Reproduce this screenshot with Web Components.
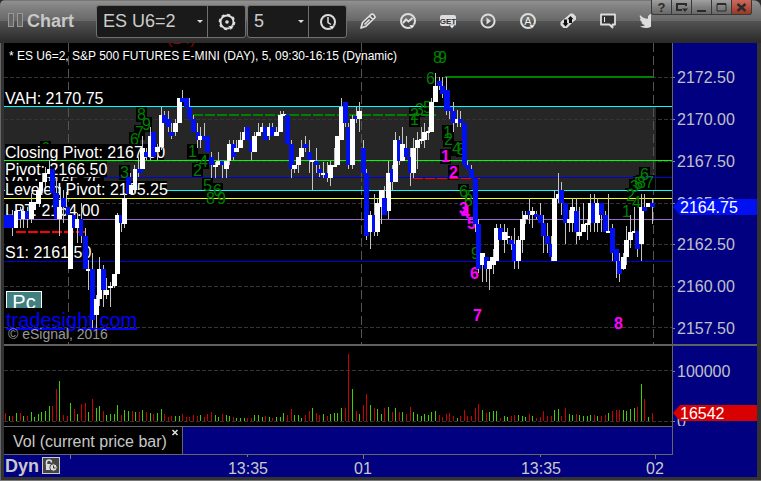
<!DOCTYPE html>
<html lang="en">
<head>
<meta charset="utf-8">
<title>Chart</title>
<style>
html,body{margin:0;height:100%;background:#2b2b2b}
body{font-family:"Liberation Sans",Arial,sans-serif;font-size:16px;color:#c8c8c8}
</style>
</head>
<body>
<chart-window>
  <title-bar slot="title" name="Chart"></title-bar>
  <price-plot slot="price"></price-plot>
  <value-axis slot="price-axis" kind="price"></value-axis>
  <volume-plot slot="volume"></volume-plot>
  <value-axis slot="volume-axis" kind="volume"></value-axis>
  <study-tabs slot="tabs">Vol (current price bar)</study-tabs>
  <time-axis slot="time"></time-axis>
</chart-window>
<script>
const define = (name, html, setup) => customElements.define(name, class extends HTMLElement {
  connectedCallback() {
    if (this.shadowRoot) return;
    this.attachShadow({mode: 'open'}).innerHTML = typeof html === 'function' ? html(this) : html;
    if (setup) setup(this, this.shadowRoot);
  }
});

/* Colour names used by the plots */
const UP = '#fff', DOWN = '#0010f0';
const rect = (x, y, w, h, fill) => `<rect x="${x}" y="${y}" width="${w}" height="${h}" fill="${fill}"/>`;
const dash = (x1, y, x2, c, d, w = 1, o = 0) => `<path d="M${x1} ${y}H${x2}" stroke="${c}" stroke-width="${w}" stroke-dasharray="${d}" stroke-dashoffset="${o}"/>`;
const px = v => Math.round(v / 3);

/* Candle sets: origin, then bodies (colour, left, right, top, bottom) and wicks (x, top, bottom), three units to a pixel */
const SETS = [
{o:[0,200], c:`b 12 22 45 84;b 22 42 45 84;w 42 54 33 84;b 54 64 33 57;w 63 75 33 57;b 75 87 33 57;w 87 102 5 57;b 162 172 -20 57;w 172 185 0 57;b 183 198 -6 20;b 198 210 20 45;w 204 219 45 207;b 216 228 45 84;w 225 240 57 84;b 237 250 57 107;b 249 264 107 207;w 258 270 207 213;b 270 285 207 360;w 282 298 297 345;w 291 305 207 297;b 303 318 207 270;w 312 327 270 285;w 324 339 258 263;w 336 351 222 258;w 345 360 45 222;b 357 369 45 70;w 366 381 -6 72`,
 w:`37 30 107;61 20 84;70 20 84;82 20 84;94 -20 70;178 0 107;190 -30 70;199 -25 20;232 40 130;244 8 130;256 84 207;265 180 270;277 160 384;289 285 384;298 170 318;310 195 320;319 235 297;331 247 321;343 222 265;352 40 222;364 45 95;373 -20 84`},
{o:[0,70], c:`w 95 108 395 420;w 108 122 360 402;w 117 130 335 362;w 130 142 308 335;w 142 152 297 312;b 150 165 297 370;b 160 176 370 410;b 378 393 322 372;w 387 400 345 372;w 399 411 297 360;b 411 429 297 308;w 420 435 235 297;b 432 444 247 260;w 444 456 198 260;b 453 468 185 260;w 465 480 232 247;w 477 492 135 232;b 486 501 135 158;b 498 513 147 170;b 507 522 185 198;w 519 534 158 185;w 531 546 85 158`,
 w:`118 345 410;127 310 370;136 290 350;148 270 310;169 320 400;181 350 400;392 310 372;403 285 372;415 260 320;427 197 310;439 235 270;451 172 270;472 222 270;484 110 240;493 122 160;504 122 185;514 158 208;526 147 198`},
{o:[170,70], c:`w 9 24 158 185;w 21 36 85 158;b 30 44 85 97;b 42 57 85 111;b 50 65 110 147;b 63 77 147 185;b 77 90 185 210;w 84 96 198 210;b 96 107 198 210;b 105 119 198 247;b 118 131 260 285;w 129 144 285 291;w 138 150 272 285;b 150 162 272 285;w 162 177 272 297;w 171 183 222 272;b 183 198 222 260;w 192 206 235 247;w 204 218 210 235;w 216 228 185 210;b 225 240 172 210;b 237 247 210 245;w 246 261 198 245;w 258 273 185 198;w 270 280 172 185;b 279 294 172 210;w 291 303 172 198;b 300 315 172 198;w 312 327 185 198;w 324 339 135 185;w 333 348 132 138;b 345 360 135 222;b 357 372 222 297;w 366 381 285 297;w 378 393 260 285;w 387 402 235 260;b 399 413 222 235;b 411 425 247 270;w 420 435 270 276;b 432 447 273 285;b 441 455 297 308;w 453 465 309 315;b 465 475 309 323;w 474 489 285 323;w 486 501 285 291;w 495 509 198 285;w 507 521 111 210;b 519 533 97 158;b 528 541 172 285;w 540 555 147 285;b 552 562 138 147;w 561 576 122 147;b 573 588 235 309;b 582 597 309 497`,
 w:`16 147 197;37 60 97;58 85 140;70 135 185;82 160 235;91 172 235;103 158 198;124 247 323;136 275 323;145 247 285;157 285 323;169 285 323;178 210 285;190 210 270;199 210 247;211 185 235;223 172 210;244 245 270;253 185 245;265 160 198;277 158 185;298 160 210;307 160 198;319 172 198;331 122 185;340 122 137;364 210 323;373 285 310;385 260 309;394 210 260;406 198 247;418 210 309;427 270 360;439 235 309;448 285 320;460 275 323;472 275 335;481 272 347;493 235 291;514 85 210;526 97 170;535 160 297;547 135 297;559 110 160;568 97 185;580 210 300;589 297 330`},
{o:[350,60], c:`w 108 123 338 453;b 120 135 328 365;w 129 144 240 365;b 141 152 240 302;w 150 165 252 302;b 162 177 264 290;b 174 189 290 338;w 183 198 264 338;w 195 210 240 264;w 207 222 237 242;w 216 231 216 240;w 228 240 213 218;w 237 252 126 216;w 249 264 78 126;b 261 276 63 78;b 270 285 78 102;b 282 299 90 153;b 297 308 142 153;b 303 318 153 188;w 315 325 177 188;b 325 340 177 190;b 336 351 190 315;b 345 360 315 327;b 357 371 327 353;b 369 384 353 492`,
 w:`115 302 340;127 315 390;136 216 240;148 228 315;157 202 302;169 228 290;181 264 378;190 235 353;202 216 327;214 202 252;223 190 264;235 202 240;244 115 216;256 40 126;268 52 90;277 52 115;289 52 165;298 90 177;310 127 215;322 150 202;331 153 200;352 302 327;364 315 353`},
{o:[350,180], c:`w 54 67 105 155;b 66 76 105 155;w 75 90 69 155;w 87 102 30 80;b 96 110 54 105;b 378 393 132 267;w 390 405 219 255;b 402 417 231 267;w 411 426 243 267;w 420 438 231 255;w 432 447 144 243;b 444 459 144 180;w 456 471 156 180;w 471 480 168 174;b 477 492 180 192;b 486 498 192 243;w 498 513 180 243;w 510 525 117 180;w 519 534 105 117;b 531 544 93 105`,
 w:`49 167 180;61 93 207;73 42 167;82 57 167;94 30 132;103 18 105;115 93 117;376 132 155;385 117 280;397 219 306;409 231 306;418 243 330;430 207 282;439 132 243;451 132 180;463 132 218;472 144 192;484 168 210;493 144 267;505 168 267;517 93 218;526 93 132;538 55 132`},
{o:[520,160], c:`w 30 45 153 165;b 42 55 163 170;b 54 69 165 190;b 63 78 190 228;b 75 90 228 252;b 87 97 252 290;w 96 111 115 302;w 108 118 102 115;b 117 131 90 128;b 129 144 128 190;w 141 153 178 190;w 150 165 140 190;b 162 177 153 216;w 171 186 216 228;w 183 198 192 216;w 195 210 190 195;w 204 216 128 190;b 214 230 128 190;w 225 240 128 190;b 237 251 128 165;b 249 264 165 216;w 258 270 213 218;b 270 285 204 278;b 282 297 267 303;b 291 306 303 342;w 303 318 290 327;w 312 327 240 290;w 324 339 216 240;w 336 348 213 218;b 345 360 213 267;w 357 372 140 252;b 366 381 140 152;w 378 390 128 140;b 390 405 128 140`,
 w:`28 115 190;37 140 203;49 153 178;61 128 190;70 165 278;82 190 278;94 228 302;103 90 115;115 40 128;124 66 165;136 128 252;148 150 216;157 115 216;169 115 252;178 140 240;190 128 216;202 178 240;211 102 216;223 102 216;232 115 216;244 128 216;256 153 216;265 102 218;277 192 303;289 267 353;298 280 365;310 280 330;319 198 315;331 165 265;343 140 216;352 213 290;364 102 303;373 102 153;397 115 192`}
];

function candles() {
  let wicks = '', bodies = '';
  for (const s of SETS) {
    for (const k of s.w.split(';')) {
      const [x, a, b] = k.split(' ').map(Number);
      wicks += rect(s.o[0] + Math.floor(x / 3), s.o[1] + px(a), 1, px(b) - px(a), '#c4c4c4');
    }
    for (const k of s.c.split(';')) {
      const p = k.split(' '), [l, r, t, b] = p.slice(1).map(Number);
      bodies += rect(s.o[0] + px(l), s.o[1] + px(t), px(r) - px(l), Math.max(2, px(b) - px(t)), p[0] === 'w' ? UP : DOWN);
    }
  }
  return wicks + bodies;
}

/* Countdown digits: text, x, baseline */
const GREEN = [['8',137,120],['9',142,130],['7',135,138],['6',130,145],['3',120,178],['2',125,160],['6',41,154],
['1',188,157],['4',199,167],['2',193,176],['5',203,191],['6',213,196],['8',206,204],['9',217,204],
['1',410,125],['2',410,120],['3',415,115],['5',423,113],['6',426,84],['8',433,63],['9',438,63],
['1',443,138],['2',444,145],['4',452,154],['5',457,155],['6',459,197],['7',462,202],['8',464,206],['9',471,259],
['1',622,217],['4',632,208],['2',626,201],['3',630,192],['5',634,189],['8',637,188],['6',640,180],['7',645,188]];
const PINK = [['1',441,162],['2',449,178],['3',459,214],['4',461,218],['5',467,229],['6',470,279],['7',473,321],['8',614,329]];
const LABELS = [['VAH: 2170.75',104,99],['VAL: 2165.75',188,99],['Closing Pivot: 2167.50',158,159],['Pivot: 2166.50',175,102],['Leveled Pivot: 2165.25',195,162],['LPT: 2164.00',216,95],['S1: 2161.50',258,86]];

define('price-plot', () => {
  let g = rect(4, 107, 652, 84, '#262626');
  for (const y of [77, 119, 161, 203, 244, 286, 327]) g += dash(4, y + .5, 672, '#343434', '4 2');
  for (const x of [68, 361, 653]) g += `<path d="M${x}.5 43V344" stroke="#555" stroke-dasharray="9 4"/>`;
  let lines = '';
  for (const [y, c] of [[106,'#00ffff'],[160,'#00ff00'],[177,'#0000e0'],[190,'#00ffff'],[198,'#ffff00'],[219,'#9966cc'],[261,'#0000e0']]) lines += rect(4, y, 668, 1, c);
  lines += dash(193, 115, 436, '#008000', '10 2', 2);
  lines += rect(445, 76, 208, 2, '#008000');
  lines += dash(16, 232, 85, '#f00', '10 2', 2) + dash(413, 178.5, 480, '#f00', '10 2');
  let boxes = '', digits = '';
  for (const [t, x, y] of GREEN) { boxes += rect(x - 1, y - 13, 11, 15, '#000'); digits += `<text x="${x}" y="${y}" fill="#008000">${t}</text>`; }
  for (const [t, x, y] of PINK) { if (y < 180) boxes += rect(x - 1, y - 13, 11, 15, '#000'); digits += `<text x="${x}" y="${y}" fill="#f0f" font-weight="bold">${t}</text>`; }
  const labels = LABELS.map(([t, y, w]) => rect(5, y - 14, w, 16, '#000') + `<text x="5" y="${y}" fill="#fff">${t}</text>`).join('');
  return `<style>
    :host{display:block;background:#000;position:relative;overflow:hidden;min-width:0}
    svg{display:block;width:100%;height:100%}
    text{font-size:16px}
    .head{font-size:12px}.copy{font-size:14px}.link{font-size:20px;text-decoration:underline}
    button{position:absolute;left:2px;bottom:36px;width:36px;height:17px;padding:0;border:1px solid #fff;border-bottom:0;background:#408080;color:#fff;font:20px/20px "Liberation Sans",sans-serif;overflow:hidden}
  </style>
  <svg viewBox="4 43 668 301" preserveAspectRatio="xMinYMin slice" role="img" aria-label="Price chart">
    <g shape-rendering="crispEdges" fill="none">${g}</g>
    ${boxes}
    <g shape-rendering="crispEdges" fill="none">${lines}</g>
    <text x="167" y="44" fill="#900000">(14)</text>
    ${digits}${labels}
    <a href="#tradesight"><text class="link" x="6" y="327" fill="#0000ff">tradesight.com</text></a>
    <text class="copy" x="8" y="339" fill="#999">© eSignal, 2016</text>
    <g shape-rendering="crispEdges">${candles()}</g>
    <text class="head" x="9" y="60" fill="#fff">* ES U6=2, S&amp;P 500 FUTURES E-MINI (DAY), 5, 09:30-16:15 (Dynamic)</text>
  </svg><button type="button">Pc</button>`;
});

/* Volume bars: origin x, then colour, x and top, three units to a pixel */
const VOLUME = [
[0,`r16 220;g28 228;r37 228;g49 219;r61 219;g70 228;r82 228;g94 216;g103 231;g115 222;g124 216;g136 213;g148 198;r157 198;r169 147;g178 123;r190 225;r202 228;g211 189;r223 207;g232 222;r244 192;r256 189;g265 216;r277 177;g289 204;g298 198;r310 213;g319 225;g331 222;g343 222;g352 195;r364 225;g373 210;g385 213;r397 213;g406 216;r418 216;g427 210;r439 216;g451 219;r460 222;g472 219;g484 207;r493 222;r505 231;r514 228;g526 228;g538 228;r547 222;r559 231;r568 231;r580 225;r592 228;g601 225;r613 231;r622 222;r634 216;g646 225;g655 231;r667 222;g679 225;g688 228;r700 231;g709 234;g721 234;g733 234;r742 234;r754 234`],
[254,`g1 225;g13 225;g25 231;r34 228;g46 231;r55 234;g67 231;g79 231;g88 219;r100 225;r112 207;g121 225;g133 225;g142 234;r154 225;r166 213;g175 204;r187 219;r196 225;g208 222;r220 228;g229 222;g241 219;g250 219;g262 204;r274 204;r283 42;g295 147;r307 213;g316 222;r328 195;r337 162;g349 195;r361 204;g370 207;g382 222;r391 204;g403 201;r415 216;g424 204;r436 216;g445 216;r457 222;r469 201;g478 216;g490 222;g502 228;g511 222;g523 225;g532 216;g544 213;r556 225;r565 231;r577 222;r586 219;r598 228;g610 234;r619 228;r631 210;r640 228;r652 228;r664 204;r673 192;g685 210;r697 219;g706 216;g718 213;g727 213;r739 234;g751 228;g760 231`],
[507,`r13 228;r22 225;g34 225;g46 228;g55 231;r67 222;g76 228;r88 234;r100 231;r109 213;r121 228;r133 228;g142 210;g154 207;r163 228;r175 204;g187 222;g196 225;r208 222;g217 225;g229 228;g241 228;g250 225;r262 225;g271 228;r283 228;r295 225;g304 219;r316 213;r328 210;r337 210;g349 210;g358 213;g370 207;g382 204;r391 201;g403 132;r412 177;g424 231;r436 219`]];
define('volume-plot', () => {
  let s = dash(4, 370.5, 672, '#343434', '4 2') + dash(4, 421.5, 672, '#343434', '4 2');
  for (const [o, d] of VOLUME) for (const k of d.split(';')) {
    const [x, t] = k.slice(1).split(' ').map(Number);
    s += rect(o + Math.floor(x / 3), 340 + px(t), 1, 81 - px(t), k[0] === 'g' ? '#44cc00' : '#cc0000');
  }
  return `<style>:host{display:block;background:#000;overflow:hidden;min-width:0}svg{display:block;width:100%;height:100%}</style>
  <svg viewBox="4 346 668 80" preserveAspectRatio="xMinYMin slice" shape-rendering="crispEdges" fill="none" role="img" aria-label="Volume">${s}</svg>`;
});

define('value-axis', el => {
  const price = el.getAttribute('kind') === 'price';
  const list = price ? [['2172.50',77],['2170.00',119],['2167.50',161],['2165.00',203],['2162.50',244],['2160.00',286],['2157.50',328]] : [['100000',371],['0',421]];
  const by = price ? 199 : 405;
  return `<style>:host{display:block;background:#000080;border-left:1px solid #666;overflow:hidden}svg{display:block;width:100%;height:100%}text{font-size:16px}</style>
  <svg viewBox="673 ${price ? '43 84 301' : '346 84 80'}" preserveAspectRatio="xMinYMin meet">
  ${list.map(([t, y]) => rect(673, y, 2, 1, '#888') + `<text x="677" y="${y + 6}" fill="#c0c0c8">${t}</text>`).join('')}
  <path d="M673 ${by + 8}L680 ${by}H757V${by + 16}H680Z" fill="${price ? '#0010f0' : '#d80000'}"/>
  <text x="680" y="${by + 14}" fill="#fff">${price ? '2164.75' : '16542'}</text></svg>`;
});

define('study-tabs', `<style>
  :host{display:flex;background:#000080;border-top:1px solid #666;border-bottom:1px solid #666;border-right:1px solid #666;box-sizing:border-box;margin-right:-1px;position:relative}
  .tab{display:flex;background:#000;border-right:1px solid #666;padding:5px 3px 0 9px;gap:4px;align-items:flex-start}
  span{line-height:20px;white-space:nowrap}
  button{border:0;background:none;padding:0;width:8px;height:8px;margin-top:-4px;display:flex}
  </style><div class="tab"><span><slot></slot></span><button type="button" aria-label="Close study"><svg width="8" height="8"><path d="M1.500 2l5 5M6.500 2l-5 5" stroke="#ddd" stroke-width="1.600"/></svg></button></div>`);

define('time-axis', `<style>
  :host{display:flex;background:#000080;height:22px;overflow:hidden}
  b{font-size:18px;line-height:22px;padding-left:1px;width:38px;box-sizing:border-box}
  button{width:18px;height:17px;margin-top:2px;padding:0;border:1px solid #ccc;background:#444;display:flex}
  svg.t{flex:1;min-width:0;height:22px}text{font-size:16px;fill:#c8c8c8;text-anchor:middle}
  </style><b>Dyn</b><button type="button" aria-label="Lock time"><svg width="16" height="15"><path d="M3.500 7V4.500a2.500 2.500 0 0 1 5 0" fill="none" stroke="#ddd" stroke-width="1.500"/><path d="M3 6h6v6H3z" fill="#ddd"/><circle cx="10.500" cy="9.500" r="3.700" fill="#ddd" stroke="#444"/><path d="M10.500 7.500v2.500h2" fill="none" stroke="#333"/></svg></button>
  <svg class="t" viewBox="60 455 697 22" preserveAspectRatio="xMinYMin slice"><path d="M70.500 455v4M247.500 455v2M363.500 455v4M540.500 455v2M655.500 455v4" stroke="#777"/>
  <text x="248" y="474">13:35</text><text x="363" y="474">01</text><text x="541" y="474">13:35</text><text x="655" y="474">02</text></svg>`);

const CARET = '<path d="M12 15h6l-3 3.500z" fill="#fff" stroke="#444" stroke-width=".5"/>';
const ICONS = {
  gear: '<circle cx="11" cy="11" r="6.500" fill="none" stroke="#ddd" stroke-width="2"/><circle cx="11" cy="11" r="7.400" fill="none" stroke="#ddd" stroke-width="1.800" stroke-dasharray="3 2.800"/><circle cx="11" cy="11" r="1.800" fill="#ddd"/>' + CARET,
  clock: '<circle cx="11" cy="11" r="7" fill="none" stroke="#ddd" stroke-width="2"/><path d="M11 6v5.500l3 2" fill="none" stroke="#ddd" stroke-width="1.500"/>' + CARET,
  pencil: '<path d="M4 18l1.500-5.500L14 4.500q1.500-1 3 .5t.5 3L9 16.200zM12.500 6l3.500 3.500M7.500 14.500l5-5" fill="#555" stroke="#e0e0e0" stroke-width="1.700" stroke-linejoin="round"/>',
  trend: '<circle cx="11" cy="11" r="7" fill="none" stroke="#ddd" stroke-width="2"/><path d="M6 13L9 9.500l2.500 2L15.500 8" fill="none" stroke="#ddd" stroke-width="2"/>' + CARET,
  get: '<rect x="3" y="5" width="16" height="11" rx="2" fill="#ddd"/><text x="11" y="13.500" text-anchor="middle" font-size="8" font-weight="bold" fill="#333">GET</text>' + CARET,
  play: '<circle cx="11" cy="11" r="6.600" fill="none" stroke="#ddd" stroke-width="2"/><path d="M9.500 7.500l4.500 3.500-4.500 3.500z" fill="#ddd"/>',
  auto: '<circle cx="11" cy="11" r="7" fill="none" stroke="#ddd" stroke-width="2"/><text x="11" y="15" text-anchor="middle" font-size="11" fill="#eee">A</text>' + CARET,
  link: '<path d="M13.500 3.500h2.500L19 6.500v3l-3 2.500-6 6H6.500L3.500 15v-3l3-2.500z" fill="#ddd"/><path d="M13.500 6l3 3.200H15V13h-3V9.200h-1.500zM8.500 16.500l-3-3.200H7V9.500h3v3.800h1.500z" fill="#111"/>',
  note: '<path d="M4 4.500h14v10h-2.500v3l-3-3H4z" fill="#333" stroke="#ddd" stroke-width="1.800" stroke-linejoin="round"/><path d="M7.500 7v5" stroke="#eee"/>',
  bird: '<path d="M3 5c2 2.500 4.500 3.500 8 3.700C10.500 5.500 12.500 4 15 4c1.500 0 2.300.7 3 1.300L20.500 5 19 7.200C19.500 14 14 18 9 18c-2.500 0-4.500-.7-6-1.700 2 0 4-.4 5-1.400-2 0-3.300-1.300-3.700-2.600h1.500C4 11.800 3 10.300 3 8.500l1.500.5C2.800 7.700 2.300 6.500 3 5z" fill="#ddd"/>'
};
define('icon-button', el => `<style>:host{display:block;width:40px;flex-shrink:0}
  button{width:100%;height:100%;padding:0;border:0;background:none;display:grid;place-items:center}svg{display:block;font-family:"Liberation Sans",sans-serif}
  </style><button type="button" aria-label="${el.getAttribute('label')}"><svg width="22" height="22">${ICONS[el.getAttribute('icon')]}</svg></button>`);

define('pick-box', el => `<style>
  :host{display:flex;height:33px;box-sizing:border-box;background:#1a1a1a;border:1px solid #707070;border-radius:3px}
  .s{display:flex;align-items:center;border-right:1px solid #707070;padding-right:4px}
  select{appearance:none;border:0;background:none;color:#ccc;font:18px/31px "Liberation Sans",sans-serif;padding:0 0 0 6px;width:${el.getAttribute('size')}px;height:31px}
  slot::slotted(icon-button){width:37px}
  </style><div class="s"><select aria-label="${el.getAttribute('label')}"><option>${el.getAttribute('value')}</option></select><svg width="6" height="4"><path d="M0 0h6L3 3z" fill="#ddd"/></svg></div><slot></slot>`);

define('window-controls', `<style>
  :host{display:flex;position:absolute;top:0;right:9px;border:1px solid #383838;border-top:0;background:#383838;gap:1px;border-radius:0 0 3px 3px;overflow:hidden}
  button{width:19px;height:14px;padding:0;border:0;background:linear-gradient(#a0a0a0,#808080 50%,#686868);display:grid;place-items:center;color:#2b2b2b;font:bold 13px/13px "Liberation Sans",sans-serif}
  .x{background:linear-gradient(#c96a5c,#b8503f 50%,#983626)}svg{display:block;fill:none;stroke:#2b2b2b;stroke-width:2}
  </style><button type="button">?</button>
  <button type="button" aria-label="Dock"><svg width="12" height="11"><path d="M10 4V2H1v6h5"/><path d="M6 6.500h6L9 10z" fill="#2b2b2b" stroke="none"/></svg></button>
  <button type="button" aria-label="Minimize"><svg width="11" height="11"><path d="M1 9h9"/></svg></button>
  <button type="button" aria-label="Maximize"><svg width="11" height="11"><path d="M1 2h9v7H1z" stroke-width="1"/><path d="M1 2h9"/></svg></button>
  <button type="button" class="x" aria-label="Close"><svg width="11" height="11"><path d="M1.500 2l8 7M9.500 2l-8 7" stroke-width="2.500"/></svg></button>`);

define('title-bar', el => `<style>
  :host{display:flex;position:relative;height:43px;box-sizing:border-box;padding:5px 0 0 8px;background:linear-gradient(#666,#909090 3%,#828282 15%,#686868 48%,#525252 50%,#2c2c2c 96%,#2b2b2b);border-radius:5px 8px 0 0;align-items:flex-start;overflow:hidden}
  .grip{display:flex;gap:3px;padding-top:8px;width:19px}
  .grip i{width:4px;height:12px;border:1px solid #999;background:#666}
  b{font-size:18px;line-height:32px;width:69px}
  pick-box{margin-right:1px}
  nav{display:flex;height:31px;flex:1;min-width:0;overflow:hidden;margin-right:110px}
  </style><div class="grip"><i></i><i></i></div><b>${el.getAttribute('name')}</b>
  <pick-box label="Symbol" value="ES U6=2" size="100"><icon-button icon="gear" label="Symbol settings"></icon-button></pick-box>
  <pick-box label="Interval" value="5" size="50"><icon-button icon="clock" label="Interval settings"></icon-button></pick-box>
  <nav><icon-button icon="pencil" label="Draw"></icon-button><icon-button icon="trend" label="Studies"></icon-button><icon-button icon="get" label="Advanced GET"></icon-button><icon-button icon="play" label="Replay"></icon-button><icon-button icon="auto" label="Auto"></icon-button><icon-button icon="link" label="Link"></icon-button><icon-button icon="note" label="Notes"></icon-button><icon-button icon="bird" label="Share"></icon-button></nav>
  <window-controls></window-controls>`);

define('chart-window', `<style>
  :host{display:grid;height:100vh;box-sizing:border-box;grid-template-rows:43px 1fr;border-bottom:1px solid #777}
  .body{display:grid;grid-template-columns:1fr 85px;grid-template-rows:1fr 2px 80px 29px 22px;padding:0 4px 3px 3px;background:#333;border-left:1px solid #666;min-height:0}
  .rule{grid-column:1/3;background:#606060}.fill{background:#000080}
  ::slotted([slot=time]){grid-column:1/3}
  ::slotted([slot=price]),::slotted([slot=price-axis]){min-height:0}
  </style><slot name="title"></slot><div class="body"><slot name="price"></slot><slot name="price-axis"></slot><div class="rule"></div><slot name="volume"></slot><slot name="volume-axis"></slot><slot name="tabs"></slot><div class="fill"></div><slot name="time"></slot></div>`);
</script>
</body>
</html>
